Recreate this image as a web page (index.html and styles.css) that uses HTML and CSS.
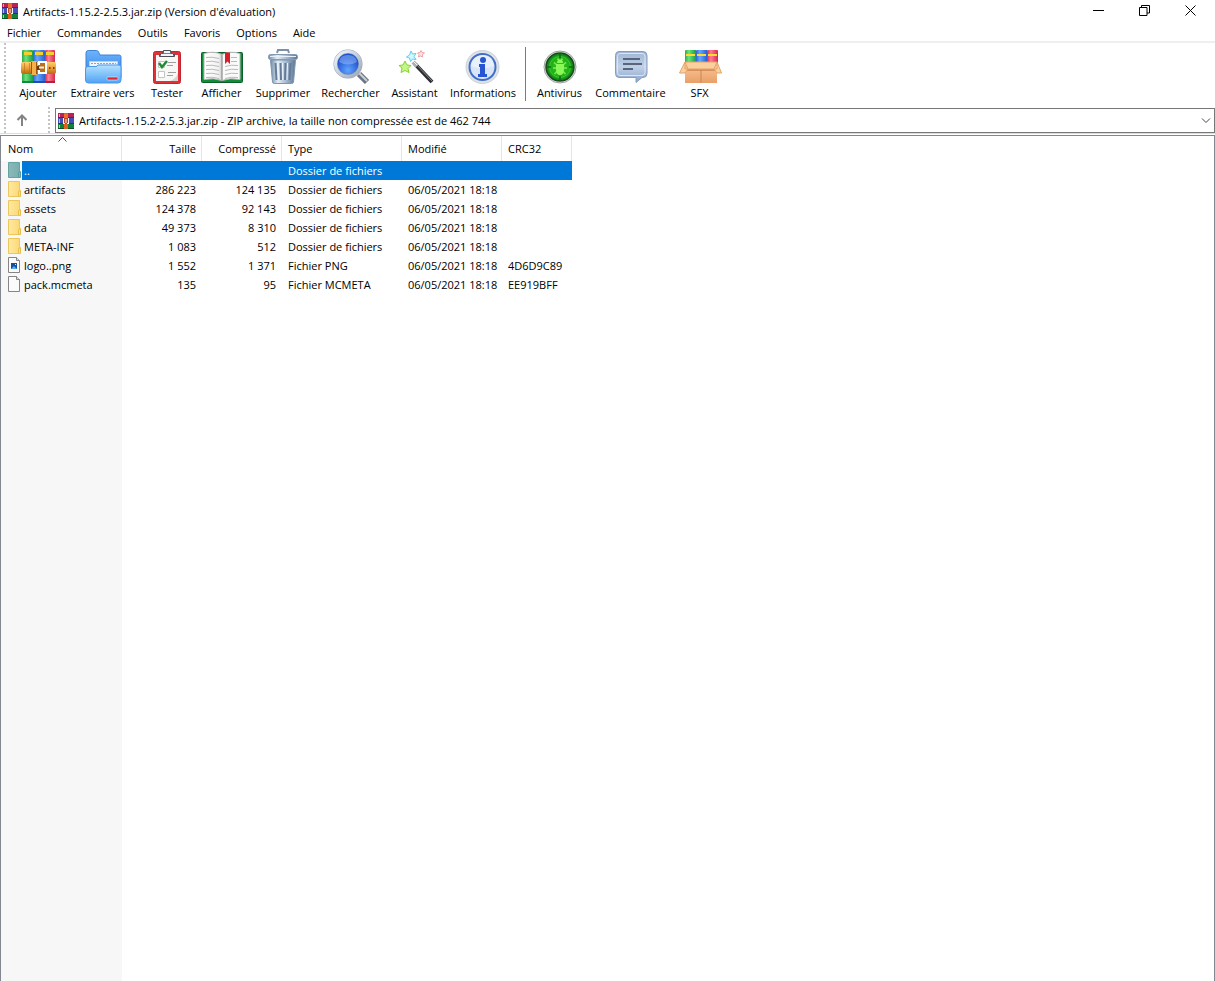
FILE: index.html
```html
<!DOCTYPE html>
<html lang="fr">
<head>
<meta charset="utf-8">
<title>Artifacts-1.15.2-2.5.3.jar.zip (Version d'évaluation)</title>
<link rel="stylesheet" href="styles.css">
</head>
<body>
<svg class="defs" aria-hidden="true">
  <defs>
    <linearGradient id="g-green"><stop offset="0" stop-color="#2fa84a"/><stop offset=".35" stop-color="#6be27c"/><stop offset="1" stop-color="#1c9c46"/></linearGradient>
    <linearGradient id="g-blue"><stop offset="0" stop-color="#2b62d2"/><stop offset=".35" stop-color="#66a8ff"/><stop offset="1" stop-color="#2a5fd0"/></linearGradient>
    <linearGradient id="g-red"><stop offset="0" stop-color="#d42a4c"/><stop offset=".35" stop-color="#ff7f95"/><stop offset="1" stop-color="#d62a4d"/></linearGradient>
    <linearGradient id="g-belt" x2="0" y2="1"><stop offset="0" stop-color="#ffcf6c"/><stop offset=".5" stop-color="#eda03a"/><stop offset="1" stop-color="#b8690f"/></linearGradient>
    <linearGradient id="g-folder" x2="0" y2="1"><stop offset="0" stop-color="#b4e2ff"/><stop offset="1" stop-color="#4fa3f5"/></linearGradient>
    <linearGradient id="g-folder-back" x2="0" y2="1"><stop offset="0" stop-color="#6db4fb"/><stop offset="1" stop-color="#2f7fe6"/></linearGradient>
    <linearGradient id="g-steel"><stop offset="0" stop-color="#7089a8"/><stop offset=".3" stop-color="#e4edf6"/><stop offset=".6" stop-color="#a9bdd3"/><stop offset="1" stop-color="#5e7693"/></linearGradient>
    <linearGradient id="g-ring" x2="1" y2="1"><stop offset="0" stop-color="#f3f7fb"/><stop offset="1" stop-color="#9aa8ba"/></linearGradient>
    <radialGradient id="g-lens" cy=".75"><stop offset="0" stop-color="#62a5ff"/><stop offset="1" stop-color="#2054cf"/></radialGradient>
    <radialGradient id="g-virus"><stop offset="0" stop-color="#2fc81f"/><stop offset=".7" stop-color="#20ae1a"/><stop offset="1" stop-color="#0b7a12"/></radialGradient>
    <linearGradient id="g-bubble" x2="0" y2="1"><stop offset="0" stop-color="#a0b6d4"/><stop offset=".5" stop-color="#c0d0e7"/><stop offset="1" stop-color="#8ba5cb"/></linearGradient>
    <linearGradient id="g-page"><stop offset="0" stop-color="#fff"/><stop offset=".8" stop-color="#f2f2f2"/><stop offset="1" stop-color="#c9c9c9"/></linearGradient>
    <linearGradient id="g-box" x2="0" y2="1"><stop offset="0" stop-color="#f9c795"/><stop offset="1" stop-color="#e99f68"/></linearGradient>
    <linearGradient id="g-file" x2="1"><stop offset="0" stop-color="#ffe9a2"/><stop offset="1" stop-color="#fbd977"/></linearGradient>
  </defs>
  <symbol id="archive" viewBox="0 0 16 16">
    <path fill="#b92457" d="M0 0h16v5H0z"/><path fill="#4450b5" d="M0 5h16v6H0z"/><path fill="#15803b" d="M0 11h16v5H0z"/>
    <path fill="#7d153d" d="M0 4h16v1H0z"/><path fill="#27307d" d="M0 10h16v1H0z"/><path fill="#0b5426" d="M0 15h16v1H0z"/>
    <path fill="#e8c33a" d="M1 1h1v3H1zM1 6h1v4H1zM1 12h1v3H1z"/>
    <path fill="#e0621f" d="M6 0h4v16H6z"/><path fill="#b8482a" d="M5 5h6v6H5z"/><path fill="#ef6e2b" d="M6 1h4v4H6z"/>
    <path fill="#f5f0f3" d="M5 5h1v6H5zM10 5h1v6h-1zM7.500 6h1v4h-1zM6 10h1v1H6zM9 10h1v1H9z"/>
  </symbol>
  <symbol id="folder-small" viewBox="0 0 14 17">
    <path fill="url(#g-file)" stroke="#ecc75c" d="M.5.5h11v15H.5z"/>
    <path fill="#fbe08c" stroke="#e7bf4e" d="M10.500 10.500l2-1v6h-2z"/>
  </symbol>
  <symbol id="file-small" viewBox="0 0 14 17">
    <path fill="#fbfbfb" stroke="#858585" d="M.5.5H8.500l3 3v12H.5z"/><path fill="#e3e3e3" stroke="#858585" d="M8.500.5v3h3"/>
  </symbol>
</svg>

<header class="titlebar">
  <svg class="app-icon"><use href="#archive"/></svg>
  <h1 class="title">Artifacts-1.15.2-2.5.3.jar.zip (Version d'évaluation)</h1>
  <div class="window-buttons">
    <button class="window-button" aria-label="Réduire"><svg viewBox="0 0 11 11"><path d="M0 5.500h11"/></svg></button>
    <button class="window-button" aria-label="Restaurer"><svg viewBox="0 0 11 11"><path d="M.5 2.500h7.500v8H.5zM2.500 2.500v-2h8v7.500H8"/></svg></button>
    <button class="window-button" aria-label="Fermer"><svg viewBox="0 0 11 11"><path d="M.5.5l10 10M10.500.5l-10 10"/></svg></button>
  </div>
</header>

<nav class="menubar">
  <button class="menu">Fichier</button>
  <button class="menu">Commandes</button>
  <button class="menu">Outils</button>
  <button class="menu">Favoris</button>
  <button class="menu">Options</button>
  <button class="menu">Aide</button>
</nav>

<div class="bars">
  <div class="grip"></div>
  <div class="bar-rows">
    <div class="toolbar">
      <button class="tool">
        <svg viewBox="0 0 44 36">
          <path fill="url(#g-green)" d="M6 2q0-1 1-1h9q1 0 1 1v32H6z"/><path fill="url(#g-blue)" d="M17 2q0-1 1-1h10q1 0 1 1v32H17z"/><path fill="url(#g-red)" d="M29 2q0-1 1-1h8q1 0 1 1v32H29z"/>
          <path fill="#f5cf2e" d="M8 3h8v3H8zM19 3h8v3h-8zM30 3h8v3h-8z"/>
          <path fill="#148a3c" d="M6 32h11v2H6z"/><path fill="#1f4fb4" d="M17 32h12v2H17z"/><path fill="#b81c3e" d="M29 32h10v2H29z"/>
          <rect x="5" y="13" width="35" height="12" rx="2" fill="url(#g-belt)"/><path d="M8.500 14v10M13.500 14v10" stroke="#b86f14" opacity=".6"/>
          <rect x="15" y="12" width="6" height="14" rx="1" fill="#f3b04b"/><path d="M15.500 13v12M20.500 13v12" stroke="#9a560c"/>
          <path fill="#b8721c" d="M22 13h8v12h-8z"/><path fill="#6b3a0a" d="M21 17h3v4h-3z"/>
          <path fill="none" stroke="#fff" stroke-width="2" d="M23 16v-3h7v11h-7v-3"/><path stroke="#f1efec" stroke-width="2" d="M23 18.500h5"/><path fill="#754008" d="M33 18h1.500v2H33zM37 18h1.500v2H37z"/>
        </svg>
        <span>Ajouter</span>
      </button>
      <button class="tool">
        <svg viewBox="0 0 44 36">
          <path fill="url(#g-folder-back)" stroke="#3c82da" d="M5 29V4q0-2.500 2.500-2.500h8q1.500 0 2 1.500l1.500 3h19q2 0 2 2v21z"/>
          <path fill="#f2f6fa" stroke="#bfd0e0" d="M8.500 12.500h28v8h-28z"/><path stroke="#8ea6bd" stroke-dasharray="2 1" d="M10 14.500h25"/>
          <path fill="url(#g-folder)" stroke="#4b97ea" d="M4.500 20q0-2.500 2.500-2.500h8q1 0 2-1.500h21q2 0 2 2v13q0 3-3 3H7.500q-3 0-3-3z"/>
          <rect x="26" y="28" width="11" height="3" rx="1" fill="#e4262c" stroke="#fff" stroke-opacity=".5"/>
        </svg>
        <span>Extraire vers</span>
      </button>
      <button class="tool">
        <svg viewBox="0 0 44 36">
          <rect x="8.500" y="2.500" width="27" height="32" rx="2" fill="#df3137" stroke="#c1262e"/><path fill="#f7f7f5" d="M11 6h22v26H11z"/><path fill="#d5d4d0" d="M33 24v8h-8q6-2 8-8z"/>
          <path fill="#7b808a" stroke="#4b4f58" d="M14.500 5.500h3l1-4h7l1 4h3v2h-15z"/><path stroke="#f0f2f5" stroke-width="2" d="M19 3h6M16 6h12"/>
          <path fill="#fff" stroke="#c4c4c4" d="M13.500 12.500h6v6h-6zM13.500 22.500h6v6h-6z"/><path fill="none" stroke="#1c8d35" stroke-width="2.500" d="M14 14l3 4 5-6"/>
          <path stroke="#a0a0a0" d="M23 13.500h8M22 16.500h6M23 23.500h8M22 26.500h6"/>
        </svg>
        <span>Tester</span>
      </button>
      <button class="tool">
        <svg viewBox="0 0 44 36">
          <rect x="1.500" y="3.500" width="41" height="30" rx="1" fill="#138c39" stroke="#086026"/>
          <path fill="url(#g-page)" stroke="#b8b8b8" d="M4 4.500q10-3 18 1v26q-8-3-18-1z"/><path fill="#fafafa" stroke="#b8b8b8" d="M22 5.500q8-4 18-1v26q-10-2-18 1z"/>
          <path fill="none" stroke="#b8babd" d="M6 8.500q6-1 13 1M6 12.500q6-1 13 1M6 16.500q6-1 13 1M6 20.500q6-1 13 1M6 24.500q6-1 13 1M6 28.500q6-1 13 1M31 8.500h6M31 12.500h6M25 17.500q6-2 13-1M25 21.500q6-2 13-1M25 25.500q6-2 13-1M25 29.500q6-2 13-1"/>
          <path stroke="#999" d="M22 6v26"/><path fill="#d91d2b" d="M25 3.500h5V15l-2.500-2.500L25 15z"/>
        </svg>
        <span>Afficher</span>
      </button>
      <button class="tool">
        <svg viewBox="0 0 44 36">
          <path fill="none" stroke="#7d90a7" stroke-width="2" d="M16 4l1-3h10l1 3"/>
          <path fill="url(#g-steel)" stroke="#7e95b0" d="M9.500 11h25l-2 22q-.2 1.500-2 1.500h-17q-1.800 0-2-1.500z"/>
          <path stroke="#647c98" stroke-width="2" d="M14.500 14l1 17M19.500 14l.5 17M24.500 14l-.5 17M29.500 14l-1 17"/>
          <path stroke="#eef4fa" d="M16.500 14l1 17M21.500 14l.3 17M26.500 14l-.5 17"/>
          <rect x="7.500" y="5.500" width="29" height="5" rx="2" fill="url(#g-steel)" stroke="#8499b2"/><path stroke="#e8f0f7" d="M9 7.500h26"/>
        </svg>
        <span>Supprimer</span>
      </button>
      <button class="tool">
        <svg viewBox="0 0 44 36">
          <path stroke="#6a7482" stroke-width="6" d="M30 25l8 8"/><path stroke="#c9d0d9" stroke-width="2" d="M30 24l8 8"/>
          <circle cx="19" cy="15" r="12.500" fill="url(#g-lens)" stroke="#93a1b5" stroke-width="4"/><circle cx="19" cy="15" r="12.500" fill="none" stroke="url(#g-ring)" stroke-width="3"/>
          <path fill="#a7c9ff" opacity=".45" d="M10 13q1-7 9-7t9 7q-9 5-18 0z"/>
        </svg>
        <span>Rechercher</span>
      </button>
      <button class="tool">
        <svg viewBox="0 0 44 36">
          <path stroke="#2c2e32" stroke-width="4" d="M22 15l17 18"/><path stroke="#8b8f95" d="M22 14l17 18"/><path stroke="#a9afb6" stroke-width="4" d="M20 13l4 4"/><path stroke="#eff1f3" stroke-width="1" d="M20 12l4 4"/>
          <path fill="#c4f58a" stroke="#85d42c" d="M12 12l2 4 4 .5-3 3 1 4-4-2-4 2 1-4.500-3-2.500 4-.5z"/>
          <path fill="#d1f8ff" stroke="#5ad0ef" d="M18 2l1.500 3 3.500-.5-2 3 2 3-3.500-.5-2 2.500-1-3.500-3-1 3-2z"/>
          <path fill="#ffe2e2" stroke="#f2a3a5" d="M28 1.500l1 2 2.500.5-2 1.500v2.500l-2-1-2 1 .5-2.500-1.500-1.500 2.500-.5z"/>
        </svg>
        <span>Assistant</span>
      </button>
      <button class="tool">
        <svg viewBox="0 0 44 36">
          <circle cx="21.500" cy="18" r="16.500" fill="#dde2e8" stroke="#ccd2d9"/><circle cx="21.500" cy="18" r="13" fill="#d8e4f7" stroke="#426fc5" stroke-width="2"/><path fill="#eff5ff" opacity=".7" d="M10 17q1-10 11.500-11T33 17q-12 5-23 0z"/>
          <circle cx="22" cy="11" r="3" fill="#2754d3"/><path fill="#2754d3" d="M18 15h6v10h2v3h-9v-3h2v-7h-1z"/>
        </svg>
        <span>Informations</span>
      </button>
      <div class="separator"></div>
      <button class="tool">
        <svg viewBox="0 0 44 36">
          <circle cx="22" cy="18" r="16" fill="#e9ebea" stroke="#9aa09c"/><circle cx="22" cy="18" r="14" fill="url(#g-virus)" stroke="#1b4a20" stroke-width="1.500"/>
          <circle cx="22" cy="18" r="10.500" fill="none" stroke="#54d843" opacity=".6"/><path stroke="#0b6a10" stroke-width="1.500" d="M22 5v4M22 27v4M9 18h4M31 18h4"/>
          <path fill="none" stroke="#7df04c" stroke-width="1.500" d="M16 13.500l3 2.500M28 13.500L25 16M15 19h4M29 19h-4M16.500 25l3-3M27.500 25l-3-3M19.500 9.500l1.500 2M24.500 9.500L23 11.500"/>
          <path fill="#8bf85a" d="M19 14q0-3.500 3-3.500t3 3.500zM18 15h8v5q0 6-4 6t-4-6z"/>
        </svg>
        <span>Antivirus</span>
      </button>
      <button class="tool">
        <svg viewBox="0 0 44 36">
          <path fill="url(#g-bubble)" stroke="#849dc2" d="M10 2.500h24q4 0 4 4v18q0 4-4 4h-1l-6 5v-5H10q-3.500 0-3.500-4v-18q0-4 3.500-4z"/><path fill="none" stroke="#dce6f3" d="M11 4.500h22q3 0 3 3v16q0 3-3 3H11q-2.500 0-2.500-3v-16q0-3 2.500-3z"/>
          <path stroke="#39465c" stroke-width="1.500" d="M14 10h17M14 15h19M14 20h10"/>
        </svg>
        <span>Commentaire</span>
      </button>
      <button class="tool">
        <svg viewBox="0 0 44 36">
          <path fill="url(#g-green)" d="M7 2q0-1 1-1h10v14H7z"/><path fill="url(#g-blue)" d="M18 2q0-1 1-1h10v14H18z"/><path fill="url(#g-red)" d="M29 2q0-1 1-1h9q1 0 1 1v13H29z"/>
          <path fill="#ffdb2d" d="M8 5h9v2H8zM19 5h9v2h-9zM30 5h9v2h-9z"/>
          <path fill="url(#g-box)" d="M7 16h32v18H7z"/><path fill="#d98f5b" d="M7 20h32v2H7z"/>
          <path fill="#fbd09f" stroke="#e3a36b" d="M7 13h32v7H7zM7 13l-5.500 11H7l3-4zM39 13l4.500 11H39l-3-4z"/><path stroke="#cc8555" d="M23 21v13"/>
        </svg>
        <span>SFX</span>
      </button>
    </div>
    <div class="pathbar">
      <button class="up" aria-label="Dossier parent"><svg viewBox="0 0 12 12"><path d="M6 12V1.500M1.500 6L6 1.500 10.500 6"/></svg></button>
      <div class="grip"></div>
      <label class="address">
        <svg class="app-icon"><use href="#archive"/></svg>
        <select class="address-select" aria-label="Chemin de l'archive"><option>Artifacts-1.15.2-2.5.3.jar.zip - ZIP archive, la taille non compressée est de 462 744</option></select>
        <svg class="chevron" viewBox="0 0 10 6"><path d="M1 .5l4 4 4-4"/></svg>
      </label>
    </div>
  </div>
</div>

<main class="listview">
  <table class="files">
    <colgroup><col class="col-name"><col class="col-size"><col class="col-size"><col class="col-type"><col class="col-date"><col class="col-crc"></colgroup>
    <thead>
      <tr><th class="sorted">Nom<svg class="sort" viewBox="0 0 9 5"><path d="M.5 4.500l4-4 4 4"/></svg></th><th class="num">Taille</th><th class="num">Compressé</th><th>Type</th><th>Modifié</th><th>CRC32</th></tr>
    </thead>
    <tbody>
      <tr class="selected"><td><div class="name"><svg><use href="#folder-small"/></svg><span>..</span></div></td><td></td><td></td><td>Dossier de fichiers</td><td></td><td></td></tr>
      <tr><td><div class="name"><svg><use href="#folder-small"/></svg><span>artifacts</span></div></td><td class="num">286 223</td><td class="num">124 135</td><td>Dossier de fichiers</td><td>06/05/2021 18:18</td><td></td></tr>
      <tr><td><div class="name"><svg><use href="#folder-small"/></svg><span>assets</span></div></td><td class="num">124 378</td><td class="num">92 143</td><td>Dossier de fichiers</td><td>06/05/2021 18:18</td><td></td></tr>
      <tr><td><div class="name"><svg><use href="#folder-small"/></svg><span>data</span></div></td><td class="num">49 373</td><td class="num">8 310</td><td>Dossier de fichiers</td><td>06/05/2021 18:18</td><td></td></tr>
      <tr><td><div class="name"><svg><use href="#folder-small"/></svg><span>META-INF</span></div></td><td class="num">1 083</td><td class="num">512</td><td>Dossier de fichiers</td><td>06/05/2021 18:18</td><td></td></tr>
      <tr><td><div class="name"><svg viewBox="0 0 14 17"><use href="#file-small" width="14" height="17"/><path fill="#174f9b" d="M3 6h6v6H3z"/><path fill="#4fb0ed" d="M3 12l3-3 3 3z"/><path fill="#d9efff" d="M7 7h1v1H7z"/></svg><span>logo..png</span></div></td><td class="num">1 552</td><td class="num">1 371</td><td>Fichier PNG</td><td>06/05/2021 18:18</td><td>4D6D9C89</td></tr>
      <tr><td><div class="name"><svg><use href="#file-small"/></svg><span>pack.mcmeta</span></div></td><td class="num">135</td><td class="num">95</td><td>Fichier MCMETA</td><td>06/05/2021 18:18</td><td>EE919BFF</td></tr>
    </tbody>
  </table>
</main>
</body>
</html>
```
FILE: styles.css
```css
* { box-sizing: border-box; }

body {
  margin: 0;
  min-height: 100vh;
  display: flex;
  flex-direction: column;
  background: #fff;
  color: #000;
  font: 11px/16px "Open Sans", "Noto Sans", sans-serif;
}

button, select {
  font: inherit;
  color: inherit;
  background: none;
  border: 0;
  padding: 0;
  margin: 0;
}

svg { display: block; flex: none; }
.defs { position: absolute; width: 0; height: 0; }
.app-icon { width: 16px; height: 16px; }

.titlebar { display: flex; height: 23px; padding-left: 2px; }
.titlebar .app-icon { margin-top: 3px; }
.title { flex: 1; margin: 4px 0 0 5px; font-size: 11px; font-weight: 400; }
.window-buttons { display: flex; padding-right: 2px; }
.window-button { width: 46px; height: 21px; display: flex; align-items: center; justify-content: center; }
.window-button svg { width: 11px; height: 11px; fill: none; stroke: #000; }

.menubar { display: flex; gap: 2px; height: 20px; border-bottom: 2px solid #efefef; }
.menu { padding: 2px 7px 0; }

.bars { display: flex; padding-left: 4px; border-bottom: 1px solid #ddd; }
.bar-rows { flex: 1; min-width: 0; }
.grip {
  width: 2px;
  background: repeating-linear-gradient(#c3c3c3 0 2px, #fff 2px 4px);
}

.toolbar {
  display: grid;
  grid-template-columns: 52px 77px 52px 57px 66px 69px 59px 78px 8px 59px 83px 55px;
  height: 62px;
  padding-left: 6px;
}
.tool { display: flex; flex-direction: column; align-items: center; padding-top: 6px; white-space: nowrap; }
.tool svg { width: 44px; height: 36px; fill: none; }
.separator { width: 1px; height: 54px; margin: 4px 0 0 3px; background: #7b7b7b; }

.pathbar { display: flex; height: 28px; padding-top: 2px; }
.up { width: 42px; padding-left: 10px; }
.up svg { width: 12px; height: 12px; fill: none; stroke: #838383; stroke-width: 2; }
.address {
  flex: 1;
  display: flex;
  align-items: center;
  gap: 5px;
  height: 25px;
  margin: 1px 0 0 5px;
  padding: 0 3px 0 2px;
  border: 1px solid #777;
}
.address-select { flex: 1; min-width: 0; height: 20px; appearance: none; }
.chevron { width: 10px; height: 6px; fill: none; stroke: #444; }

.listview {
  flex: 1;
  margin-top: 1px;
  border: solid #828790;
  border-width: 1px 1px 0;
  background: linear-gradient(#f7f7f7, #f7f7f7) 0 25px / 121px 100% no-repeat;
}
.files { width: 571px; table-layout: fixed; border-collapse: collapse; }
.col-name { width: 121px; }
.col-size { width: 80px; }
.col-type { width: 120px; }
.col-date { width: 100px; }
.col-crc { width: 70px; }
.files th { height: 25px; padding: 0 6px; text-align: left; font-weight: 400; background: linear-gradient(#e5e5e5, #e5e5e5) right / 1px 100% no-repeat; }
.files .sorted { position: relative; padding-left: 7px; }
.sort { position: absolute; top: 1px; left: 57px; width: 9px; height: 5px; fill: none; stroke: #555; }
.files td { height: 19px; padding: 0 6px; white-space: nowrap; }
.files td:first-child { padding: 0; }
.files .num { text-align: right; }
.name { display: flex; align-items: center; height: 19px; padding-left: 7px; }
.name svg { width: 14px; height: 17px; }
.name span { flex: 1; padding-left: 2px; line-height: 19px; }
.selected td { background: #0078d7; color: #fff; }
.selected td:first-child { background: none; }
.selected .name span { background: #0078d7; }
.selected .name svg { filter: hue-rotate(125deg) saturate(60%) brightness(75%); }
```
